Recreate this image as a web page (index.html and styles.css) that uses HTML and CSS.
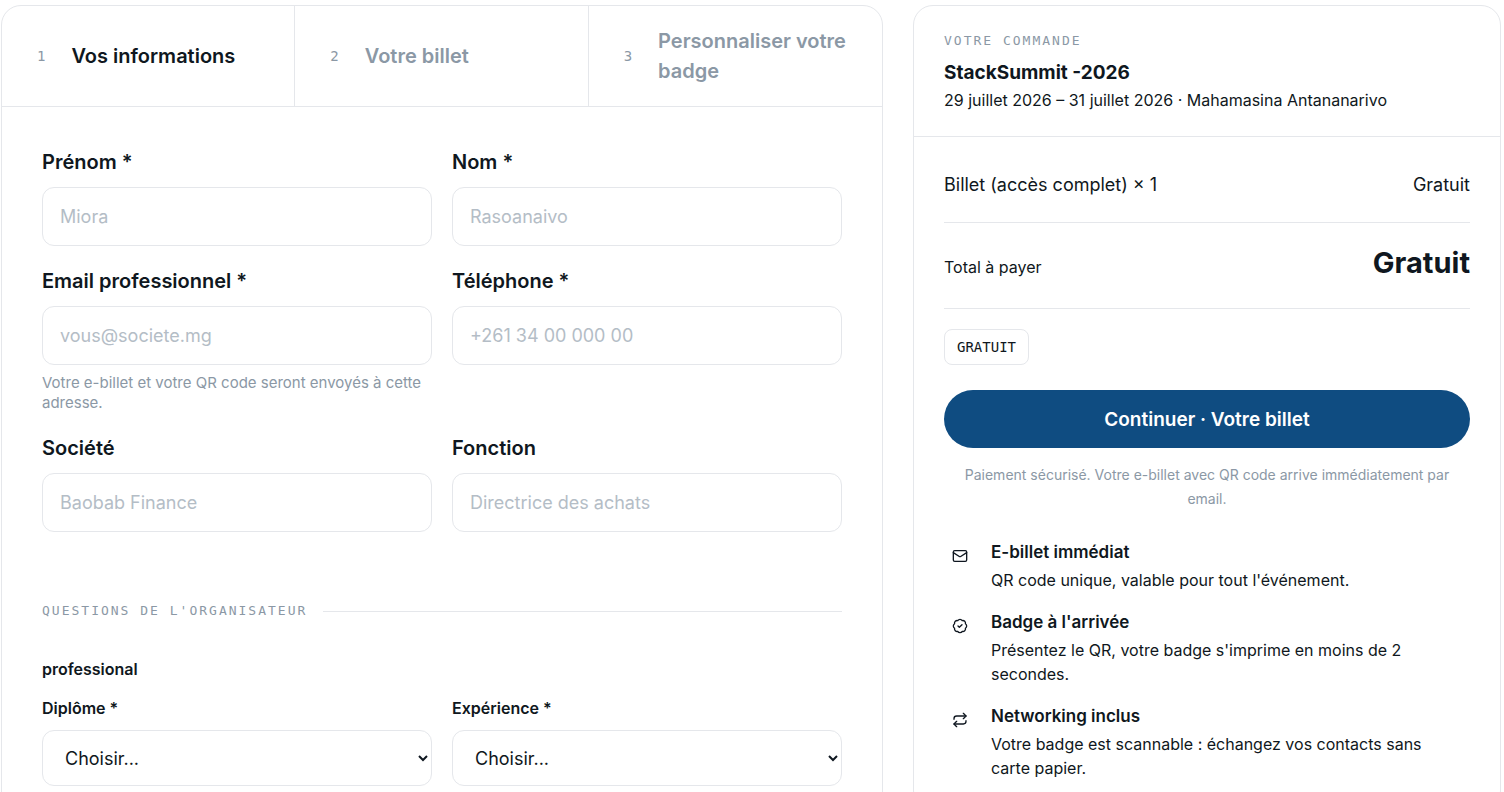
FILE: index.html
```
<!DOCTYPE html>
<html lang="fr">
<head>
    <meta charset="UTF-8">
    <meta name="viewport" content="width=device-width, initial-scale=1.0">
    <title>StackSummit -2026 - Inscription</title>
    <link rel="stylesheet" href="styles.css">
</head>
<body>
    <div class="checkout">
        <main class="card form-card">
            <ol class="steps">
                <li class="step active"><span class="step-num">1</span><span>Vos informations</span></li>
                <li class="step"><span class="step-num">2</span><span>Votre billet</span></li>
                <li class="step"><span class="step-num">3</span><span>Personnaliser votre badge</span></li>
            </ol>

            <form id="infoForm" class="form-body">
                <div class="form-grid">
                    <div class="field">
                        <label for="prenom">Prénom *</label>
                        <input type="text" id="prenom" placeholder="Miora" required>
                    </div>
                    <div class="field">
                        <label for="nom">Nom *</label>
                        <input type="text" id="nom" placeholder="Rasoanaivo" required>
                    </div>
                    <div class="field">
                        <label for="email">Email professionnel *</label>
                        <input type="email" id="email" placeholder="vous@societe.mg" required>
                        <p class="hint">Votre e-billet et votre QR code seront envoyés à cette adresse.</p>
                    </div>
                    <div class="field">
                        <label for="telephone">Téléphone *</label>
                        <input type="tel" id="telephone" placeholder="+261 34 00 000 00" required>
                    </div>
                    <div class="field">
                        <label for="societe">Société</label>
                        <input type="text" id="societe" placeholder="Baobab Finance">
                    </div>
                    <div class="field">
                        <label for="fonction">Fonction</label>
                        <input type="text" id="fonction" placeholder="Directrice des achats">
                    </div>
                </div>

                <div class="divider eyebrow">QUESTIONS DE L'ORGANISATEUR</div>

                <h3 class="group-title">professional</h3>
                <div class="form-grid questions">
                    <div class="field">
                        <label for="diplome">Diplôme *</label>
                        <select id="diplome" required>
                            <option value="">Choisir...</option>
                        </select>
                    </div>
                    <div class="field">
                        <label for="experience">Expérience *</label>
                        <select id="experience" required>
                            <option value="">Choisir...</option>
                        </select>
                    </div>
                </div>
            </form>
        </main>

        <aside class="card summary">
            <header class="summary-head">
                <p class="eyebrow">VOTRE COMMANDE</p>
                <h2>StackSummit -2026</h2>
                <p class="event-info">29 juillet 2026 – 31 juillet 2026 · Mahamasina Antananarivo</p>
            </header>

            <div class="summary-body">
                <div class="line-item">
                    <span>Billet (accès complet) × 1</span>
                    <span>Gratuit</span>
                </div>
                <div class="total">
                    <span>Total à payer</span>
                    <strong>Gratuit</strong>
                </div>
                <span class="chip">GRATUIT</span>
                <button type="submit" form="infoForm" class="btn-primary">Continuer · Votre billet</button>
                <p class="secure">Paiement sécurisé. Votre e-billet avec QR code arrive immédiatement par email.</p>

                <ul class="perks">
                    <li>
                        <span class="perk-icon">
                            <svg viewBox="0 0 24 24" aria-hidden="true"><rect x="2" y="4" width="20" height="16" rx="2"/><path d="m2 7 8.97 5.7a1.94 1.94 0 0 0 2.06 0L22 7"/></svg>
                        </span>
                        <div>
                            <h4>E-billet immédiat</h4>
                            <p>QR code unique, valable pour tout l'événement.</p>
                        </div>
                    </li>
                    <li>
                        <span class="perk-icon">
                            <svg viewBox="0 0 24 24" aria-hidden="true"><path d="M3.85 8.62a4 4 0 0 1 4.78-4.77 4 4 0 0 1 6.74 0 4 4 0 0 1 4.78 4.78 4 4 0 0 1 0 6.74 4 4 0 0 1-4.77 4.78 4 4 0 0 1-6.75 0 4 4 0 0 1-4.78-4.77 4 4 0 0 1 0-6.76Z"/><path d="m9 12 2 2 4-4"/></svg>
                        </span>
                        <div>
                            <h4>Badge à l'arrivée</h4>
                            <p>Présentez le QR, votre badge s'imprime en moins de 2 secondes.</p>
                        </div>
                    </li>
                    <li>
                        <span class="perk-icon">
                            <svg viewBox="0 0 24 24" aria-hidden="true"><path d="m17 2 4 4-4 4"/><path d="M3 11v-1a4 4 0 0 1 4-4h14"/><path d="m7 22-4-4 4-4"/><path d="M21 13v1a4 4 0 0 1-4 4H3"/></svg>
                        </span>
                        <div>
                            <h4>Networking inclus</h4>
                            <p>Votre badge est scannable : échangez vos contacts sans carte papier.</p>
                        </div>
                    </li>
                </ul>
            </div>
        </aside>
    </div>
</body>
</html>
```
FILE: styles.css
```
* {
    box-sizing: border-box;
}

body {
    margin: 0;
    padding: 5px 3px 30px 1px;
    font-family: Inter, "Liberation Sans", sans-serif;
    font-size: 16px;
    line-height: 24px;
    color: #0f1720;
    background: #ffffff;
}

h2, h3, h4, p, ul, ol {
    margin: 0;
    padding: 0;
}

ul, ol {
    list-style: none;
}

.checkout {
    display: grid;
    grid-template-columns: 3fr 2fr;
    gap: 30px;
    align-items: start;
}

.card {
    min-width: 0;
    background: #ffffff;
    border: 1px solid #e5e7eb;
    border-radius: 20px;
}

.eyebrow {
    font-family: "DejaVu Sans Mono", monospace;
    font-size: 13px;
    line-height: 20px;
    letter-spacing: 2px;
    color: #8b98a5;
}

/* Steps */
.steps {
    display: grid;
    grid-template-columns: repeat(3, 1fr);
    border-bottom: 1px solid #e5e7eb;
}

.step {
    display: flex;
    align-items: center;
    gap: 26px;
    padding: 20px 20px 20px 35px;
    border-right: 1px solid #e5e7eb;
    font-size: 20px;
    font-weight: 600;
    line-height: 30px;
    color: #8b98a5;
}

.step:last-child {
    border-right: none;
}

.step.active {
    color: #0f1720;
}

.step-num {
    font-family: "DejaVu Sans Mono", monospace;
    font-size: 14px;
    font-weight: 400;
    color: #8b98a5;
}

/* Form */
.form-body {
    padding: 40px;
}

.form-grid {
    display: grid;
    grid-template-columns: 1fr 1fr;
    gap: 20px;
}

.field {
    display: flex;
    flex-direction: column;
    min-width: 0;
}

.field label {
    margin-bottom: 10px;
    font-size: 20px;
    font-weight: 600;
    line-height: 30px;
}

.field input,
.field select {
    width: 100%;
    border: 1px solid #e5e7eb;
    border-radius: 12px;
    background: #ffffff;
    color: #0f1720;
    font-family: inherit;
    font-size: 18px;
}

.field input {
    height: 59px;
    padding: 0 17px;
}

.field select {
    height: 56px;
    padding: 0 0 0 18px;
}

.field input::placeholder {
    color: #b4bdc6;
    opacity: 1;
}

.hint {
    margin-top: 8px;
    font-size: 15px;
    line-height: 20px;
    color: #8b98a5;
}

.divider {
    display: flex;
    align-items: center;
    gap: 16px;
    margin: 69px 0 36px;
}

.divider::after {
    content: "";
    flex: 1;
    height: 1px;
    background: #e5e7eb;
}

.group-title {
    margin-bottom: 15px;
    font-size: 16px;
    font-weight: 600;
}

.questions label {
    font-size: 16px;
    line-height: 24px;
}

/* Order summary */
.summary-head {
    padding: 25px 30px 24px;
    border-bottom: 1px solid #e5e7eb;
}

.summary-head h2 {
    margin-top: 7px;
    font-size: 19px;
    font-weight: 700;
    line-height: 30px;
}

.summary-body {
    padding: 30px;
}

.line-item,
.total {
    display: flex;
    justify-content: space-between;
    align-items: baseline;
    border-bottom: 1px solid #e5e7eb;
}

.line-item {
    padding: 6px 0 25px;
    font-size: 18px;
}

.total {
    padding: 20px 0 25px;
    margin-bottom: 20px;
}

.total strong {
    font-size: 29px;
    font-weight: 700;
    line-height: 40px;
}

.chip {
    display: inline-block;
    padding: 5px 12px;
    border: 1px solid #e5e7eb;
    border-radius: 8px;
    font-family: "DejaVu Sans Mono", monospace;
    font-size: 14px;
}

.btn-primary {
    display: block;
    width: 100%;
    height: 58px;
    margin-top: 25px;
    border: none;
    border-radius: 29px;
    background: #0f4c81;
    color: #ffffff;
    font-family: inherit;
    font-size: 19px;
    font-weight: 600;
    cursor: pointer;
}

.btn-primary:hover {
    background: #0c3f6b;
}

.secure {
    margin: 15px 0 29px;
    font-size: 14px;
    text-align: center;
    color: #8b98a5;
}

.perks {
    display: grid;
    gap: 18px;
    padding-right: 10px;
}

.perks li {
    display: flex;
    gap: 15px;
}

.perk-icon {
    display: flex;
    flex: none;
    align-items: center;
    justify-content: center;
    width: 32px;
    height: 32px;
}

.perk-icon svg {
    width: 16px;
    height: 16px;
    fill: none;
    stroke: #0f1720;
    stroke-width: 2;
    stroke-linecap: round;
    stroke-linejoin: round;
}

.perks h4 {
    margin-bottom: 4px;
    font-size: 17px;
    font-weight: 600;
}

@media (max-width: 900px) {
    .checkout {
        grid-template-columns: 1fr;
    }
}
```
